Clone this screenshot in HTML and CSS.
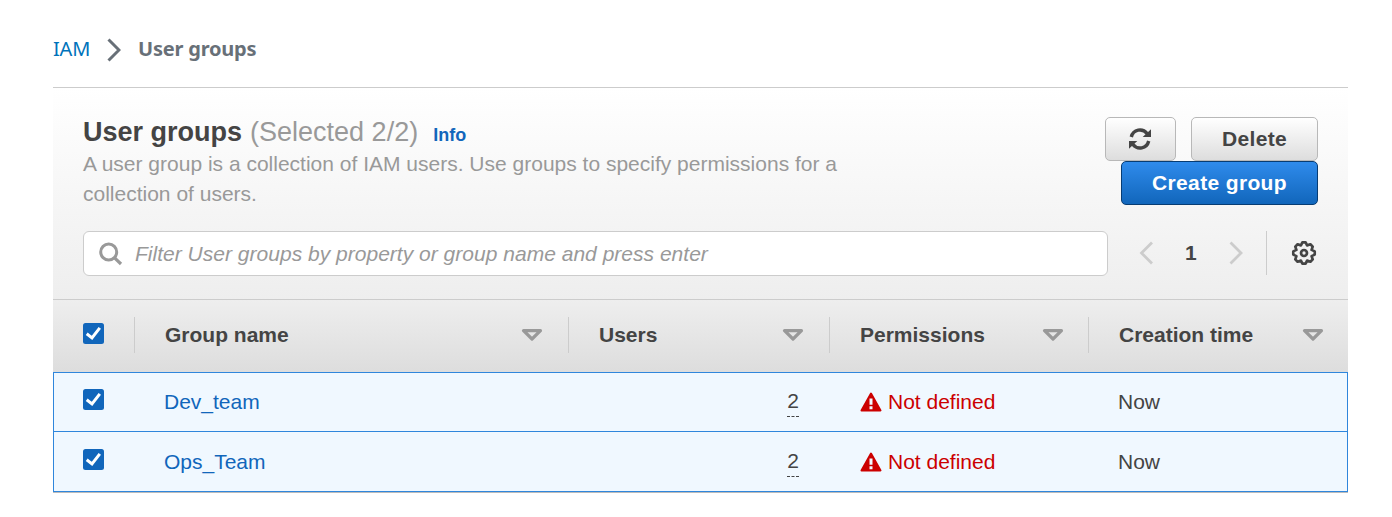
FILE: index.html
```html
<!DOCTYPE html>
<html lang="en">
<head>
<meta charset="utf-8">
<title>User groups</title>
<link rel="stylesheet" href="styles.css">
</head>
<body>
<svg class="defs" width="0" height="0">
  <symbol id="check" viewBox="0 0 21 21"><rect width="21" height="21" rx="2.500" fill="#1166bb"/><path d="M3.700 10.800L9 15L16.800 4.800" fill="none" stroke="#fff" stroke-width="3"/></symbol>
  <symbol id="sort" viewBox="0 0 22 14"><path d="M2.500 2.700h17L11 11z" fill="none" stroke="#999" stroke-width="3.200" stroke-linejoin="round"/></symbol>
  <symbol id="warn" viewBox="0 0 22 20"><path d="M11 1.500L20.500 18.500H1.500z" fill="#c00" stroke="#c00" stroke-width="2" stroke-linejoin="round"/><path d="M11 6.500v6.200M11 14.300v3" stroke="#f0f8ff" stroke-width="3"/></symbol>
</svg>
<nav class="crumbs">
  <a class="crumb-link">IAM</a>
  <svg class="crumb-sep" width="14" height="24" viewBox="0 0 14 24"><path d="M1.500 1.500L12 12L1.500 22.500" fill="none" stroke="#687078" stroke-width="3"/></svg>
  <span class="crumb-current">User groups</span>
</nav>
<main class="panel">
  <header class="head">
    <div class="top">
      <div class="intro">
        <div class="title-row"><h1 class="title">User groups</h1><span class="count">(Selected 2/2)</span><a class="info">Info</a></div>
        <p class="desc">A user group is a collection of IAM users. Use groups to specify permissions for a collection of users.</p>
      </div>
      <div class="actions">
        <button class="btn refresh"><svg width="22" height="22" viewBox="0 0 22 22"><g fill="none" stroke="#444" stroke-width="3.400"><path d="M2.300 9C4.200 1.200 13.500 -0.300 18.300 5.800"/><path d="M19.700 13C17.800 20.800 8.500 22.300 3.700 16.200"/></g><path d="M22 1.300V9h-8.300zM0 20.700V13h8.300z" fill="#444"/></svg></button>
        <button class="btn delete">Delete</button>
        <button class="btn create">Create group</button>
      </div>
    </div>
    <div class="tools">
      <div class="search">
        <svg width="24" height="24" viewBox="0 0 24 24"><circle cx="9.700" cy="10" r="8" fill="none" stroke="#999" stroke-width="3"/><path d="M15.300 15.600L22 22" stroke="#999" stroke-width="3.200"/></svg>
        <span class="hint">Filter User groups by property or group name and press enter</span>
      </div>
      <svg class="prev" width="14" height="24" viewBox="0 0 14 24"><path d="M13 1.500L2.500 12L13 22.500" fill="none" stroke="#ccc" stroke-width="2.800"/></svg>
      <span class="page">1</span>
      <svg class="next" width="14" height="24" viewBox="0 0 14 24"><path d="M1.500 1.500L12 12L1.500 22.500" fill="none" stroke="#ccc" stroke-width="2.800"/></svg>
      <div class="settings"><svg width="26" height="26" viewBox="0 0 26 26"><path d="M11.400 2.300H14.600L16.100 5.400L19.400 4.300L21.700 6.600L20.600 9.900L23.700 11.400V14.600L20.600 16.100L21.700 19.400L19.400 21.700L16.100 20.600L14.600 23.700H11.400L9.900 20.600L6.600 21.700L4.300 19.400L5.400 16.100L2.300 14.600V11.400L5.400 9.900L4.300 6.600L6.600 4.300L9.900 5.400z" fill="none" stroke="#444" stroke-width="2.700" stroke-linejoin="round"/><circle cx="13" cy="13" r="3" fill="none" stroke="#444" stroke-width="2.700"/></svg></div>
    </div>
  </header>
  <div class="row labels">
    <div class="cell"><svg class="box"><use href="#check"/></svg></div>
    <div class="cell">Group name<svg class="sort"><use href="#sort"/></svg></div>
    <div class="cell">Users<svg class="sort"><use href="#sort"/></svg></div>
    <div class="cell">Permissions<svg class="sort"><use href="#sort"/></svg></div>
    <div class="cell">Creation time<svg class="sort"><use href="#sort"/></svg></div>
  </div>
  <div class="row data first">
    <div class="cell"><svg class="box"><use href="#check"/></svg></div>
    <div class="cell name">Dev_team</div>
    <div class="cell users"><span class="num">2</span></div>
    <div class="cell perms"><svg class="warn"><use href="#warn"/></svg>Not defined</div>
    <div class="cell">Now</div>
  </div>
  <div class="row data">
    <div class="cell"><svg class="box"><use href="#check"/></svg></div>
    <div class="cell name">Ops_Team</div>
    <div class="cell users"><span class="num">2</span></div>
    <div class="cell perms"><svg class="warn"><use href="#warn"/></svg>Not defined</div>
    <div class="cell">Now</div>
  </div>
</main>
</body>
</html>
```
FILE: styles.css
```css
* { box-sizing: border-box; }
body { margin: 0; background: #fff; color: #444; font: 21px/30px "Liberation Sans", Arial, sans-serif; }
svg { display: block; flex: none; }
.defs { position: absolute; }
.crumbs { display: flex; align-items: center; height: 87px; padding: 11px 0 0 53px; font-family: "Noto Sans", sans-serif; font-size: 20px; letter-spacing: -0.2px; }
.crumb-link { width: 37px; color: #0073bb; }
.crumb-sep { margin: 2px 17px 0 17px; }
.crumb-current { color: #687078; font-weight: 700; }
.panel { width: 1295px; margin-left: 53px; border-top: 1px solid #ccc; border-bottom: 1px solid #bbb; background: #fff; }
.head { height: 211px; padding: 29px 30px 0; background: linear-gradient(#fff, #eee); }
.top { display: flex; justify-content: space-between; height: 114px; }
.intro { width: 780px; }
.title-row { display: flex; align-items: baseline; height: 32px; line-height: 30px; }
.title { margin: 0 8px 0 0; font-size: 27px; line-height: 30px; }
.count { color: #999; font-size: 27px; }
.info { margin-left: 15px; color: #1166bb; font-size: 18px; font-weight: 700; }
.desc { margin: 0; color: #999; }
.actions { display: flex; flex-wrap: wrap; align-content: flex-start; justify-content: flex-end; column-gap: 15px; width: 230px; }
.btn { display: flex; align-items: center; justify-content: center; height: 44px; padding: 0; border: 1px solid #b8b8b8; border-radius: 5px; background: linear-gradient(#fff, #ddd); color: #444; font: 700 21px "Liberation Sans", Arial, sans-serif; letter-spacing: 0.35px; }
.refresh { width: 71px; padding-right: 1px; }
.delete { width: 127px; }
.create { width: 197px; border-color: #073c73; background: linear-gradient(#2f8bec, #1166bb); color: #fff; }
.tools { display: flex; align-items: center; height: 45px; }
.search { display: flex; flex: none; align-items: center; width: 1025px; height: 45px; padding-left: 15px; border: 1px solid #ccc; border-radius: 6px; background: #fff; }
.hint { margin-left: 12px; color: #999; font-style: italic; letter-spacing: 0.015px; }
.prev { margin: 0 0 1px 31px; }
.page { width: 12px; margin: 0 32px 2px; font-weight: 700; }
.next { margin-bottom: 1px; }
.settings { display: flex; align-items: center; height: 44px; margin: 0 0 1px 23px; padding-left: 24px; border-left: 1px solid #ccc; }
.row { display: grid; grid-template-columns: 82px 434px 261px 259px 259px; }
.labels { height: 73px; padding: 17px 0; border-top: 1px solid #ccc; background: linear-gradient(#eee, #ddd); font-weight: 700; }
.cell { display: flex; align-items: center; padding-left: 30px; }
.labels .cell { height: 36px; padding-right: 25px; border-right: 1px solid #ccc; }
.labels .cell:nth-child(4) { padding-right: 24px; }
.labels .cell:last-child { padding-right: 24px; border-right: 0; }
.box { width: 21px; height: 21px; }
.labels .box { margin-top: -3px; }
.sort { width: 22px; height: 14px; margin-left: auto; }
.data { height: 60px; border: 1px solid #2f86dc; border-top: 0; background: #f0f8ff; }
.first { border-top: 1px solid #2f86dc; }
.data .cell { padding-left: 28px; }
.data .cell:first-child { padding-left: 29px; }
.data .box { margin-top: -5px; }
.first .box { margin-top: -6px; }
.name { color: #1166bb; }
.data .users { justify-content: flex-end; padding-right: 32px; }
.num { height: 30px; line-height: 28px; border-bottom: 1px dashed #444; }
.data .perms { padding-left: 29px; color: #c00; }
.warn { width: 22px; height: 20px; margin-right: 6px; }
```
